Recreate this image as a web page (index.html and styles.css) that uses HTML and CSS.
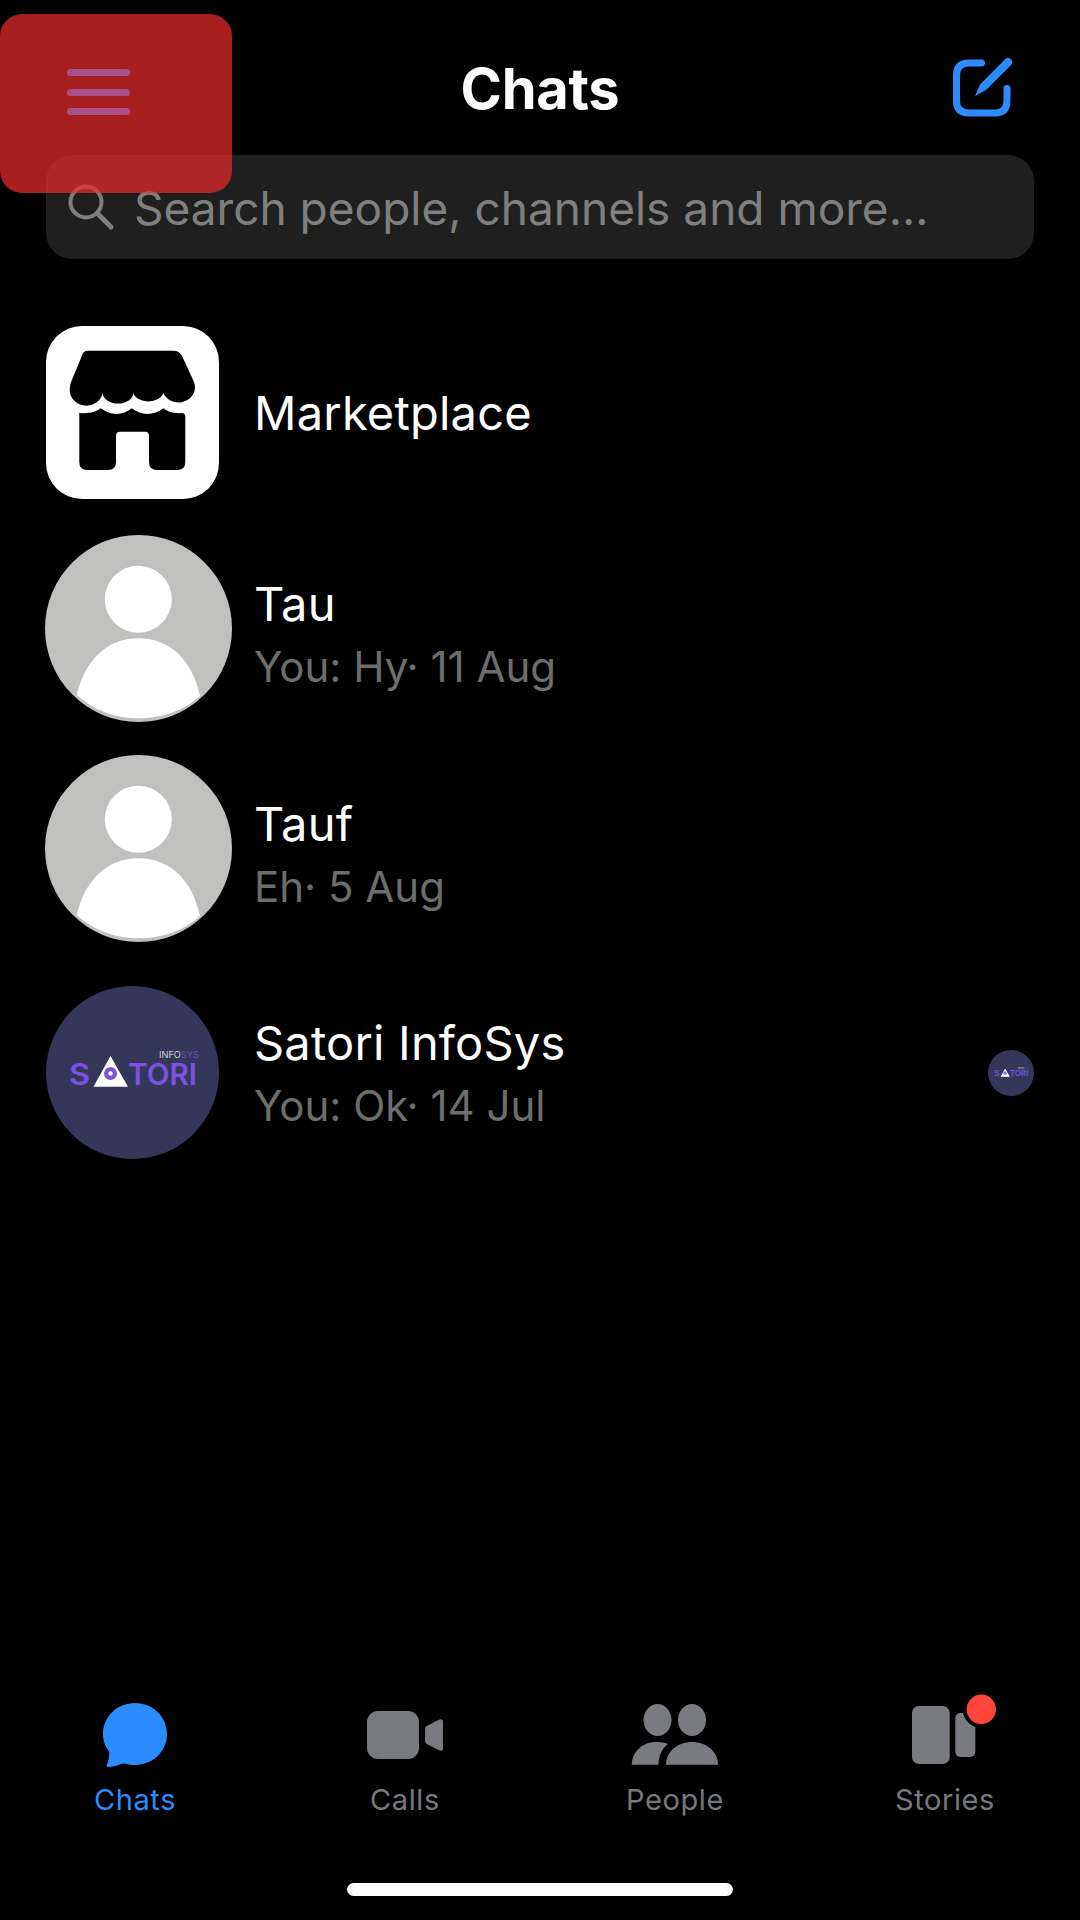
FILE: index.html
```html
<!DOCTYPE html>
<html lang="en">
<head>
    <meta charset="UTF-8">
    <meta name="viewport" content="width=device-width, initial-scale=1.0">
    <title>Chats</title>
    <link rel="stylesheet" href="styles.css">
</head>
<body>
    <div class="screen">
        <!-- Header -->
        <header class="top-bar">
            <h1 class="title">Chats</h1>
            <svg class="compose-icon" viewBox="0 0 66 64" aria-label="New message">
                <path d="M31.5 7H19Q6.5 7 6.5 19V45Q6.5 57 19 57H45Q57 57 57 45V32.5" fill="none" stroke="#2a8cff" stroke-width="7" stroke-linecap="round"/>
                <path d="M25 40L30 28.5L55.3 3A4.2 4.2 0 0 1 61.3 8.8L36 34Z" fill="#2a8cff"/>
            </svg>
        </header>

        <!-- Search -->
        <div class="search-bar">
            <svg class="search-icon" viewBox="0 0 48 48">
                <circle cx="19" cy="19" r="15.5" fill="none" stroke="#7e7e7e" stroke-width="4"/>
                <path d="M30.5 30.5L44 44" stroke="#7e7e7e" stroke-width="5" stroke-linecap="round"/>
            </svg>
            <span class="search-text">Search people, channels and more...</span>
        </div>

        <!-- Chat list -->
        <div class="chat-list">
            <div class="chat-row">
                <div class="avatar-slot">
                    <svg class="tile-avatar" viewBox="0 0 173 173">
                        <rect width="173" height="173" rx="36" fill="#fff"/>
                        <path d="M41 24.7H128Q134 24.7 137 32L147.5 55Q149 58 149 61A16.5 15.5 0 0 1 117.3 67A15.3 10.5 0 0 1 87.3 67A15.3 10.5 0 0 1 56.7 67A16.5 15.5 0 0 1 24 61Q24 58 25.5 55L35 32Q37 24.7 41 24.7Z" fill="#000"/>
                        <path d="M33.3 87C42 88 50 86 54.7 82.3C60 86 66 88 70 88C76 88 81 86 85.7 82.3C91 86 96 88 101 88C107 88 113 86 117.3 82.3C122 86 130 88 136 87Q139.3 87 139.3 91V136Q139.3 144 131 144H111Q103 144 103 136V110Q103 105.7 99 105.7H74Q70 105.7 70 110V136Q70 144 62 144H41Q33.3 144 33.3 136Z" fill="#000"/>
                    </svg>
                </div>
                <div class="chat-info">
                    <div class="chat-name">Marketplace</div>
                </div>
            </div>

            <div class="chat-row person-row">
                <div class="avatar-slot">
                    <svg class="person-avatar" viewBox="0 0 187 187">
                        <circle cx="93.5" cy="93.5" r="93.5" fill="#c0c0bf"/>
                        <circle cx="93.3" cy="64.3" r="33.5" fill="#fff"/>
                        <path d="M31.7 160C40 125 62 103.3 93.3 103.3C125 103.3 147 125 155 161C140 175 118 183.3 93.3 183.3C70 183.3 48 175 31.7 160Z" fill="#fff"/>
                    </svg>
                </div>
                <div class="chat-info">
                    <div class="chat-name">Tau</div>
                    <div class="chat-last">You: Hy· 11 Aug</div>
                </div>
            </div>

            <div class="chat-row person-row tauf-row">
                <div class="avatar-slot">
                    <svg class="person-avatar" viewBox="0 0 187 187">
                        <circle cx="93.5" cy="93.5" r="93.5" fill="#c0c0bf"/>
                        <circle cx="93.3" cy="64.3" r="33.5" fill="#fff"/>
                        <path d="M31.7 160C40 125 62 103.3 93.3 103.3C125 103.3 147 125 155 161C140 175 118 183.3 93.3 183.3C70 183.3 48 175 31.7 160Z" fill="#fff"/>
                    </svg>
                </div>
                <div class="chat-info">
                    <div class="chat-name">Tauf</div>
                    <div class="chat-last">Eh· 5 Aug</div>
                </div>
            </div>

            <div class="chat-row satori-row">
                <div class="avatar-slot">
                    <svg class="tile-avatar" viewBox="0 0 173 173">
                        <g id="satoriLogo">
                            <circle cx="86.5" cy="86.5" r="86.5" fill="#35375a"/>
                            <text class="logo-small" x="113" y="72"><tspan fill="#cfcfd8">INFO</tspan><tspan fill="#6d4fc4">SYS</tspan></text>
                            <text class="logo-big" x="23" y="99" textLength="21" lengthAdjust="spacingAndGlyphs">S</text>
                            <path d="M64.5 70L82 100.7H47.5Z" fill="#fff"/>
                            <circle cx="64.500" cy="87.500" r="6.500" fill="#7b52e0"/>
                            <circle cx="64.500" cy="87.500" r="2.200" fill="#fff"/>
                            <text class="logo-big" x="82" y="99" textLength="69" lengthAdjust="spacingAndGlyphs">TORI</text>
                        </g>
                    </svg>
                </div>
                <div class="chat-info">
                    <div class="chat-name">Satori InfoSys</div>
                    <div class="chat-last">You: Ok· 14 Jul</div>
                </div>
                <svg class="seen-avatar" viewBox="0 0 173 173"><use href="#satoriLogo"/></svg>
            </div>
        </div>

        <!-- Bottom tabs -->
        <nav class="tab-bar">
            <div class="tab tab-active">
                <svg class="tab-icon" viewBox="0 0 90 72">
                    <path d="M45 5C63 5 77 19 77 36C77 53 63 67 45 67C41 67 37 66.400 33.300 65.200C28 67.500 22 69 18 69C16.500 69 16.500 67.500 17 66.500C18.500 63 19.500 58 19.300 53.700C15.500 49 13 43 13 36C13 19 27 5 45 5Z" fill="#2a8cff"/>
                </svg>
                <span class="tab-label">Chats</span>
            </div>
            <div class="tab">
                <svg class="tab-icon" viewBox="0 0 90 72">
                    <rect x="7" y="13" width="52" height="48" rx="11" fill="#797b81"/>
                    <path d="M65 31Q65 29 66.500 28L79.500 21.500Q83 20.500 83 24V50Q83 53.500 79.500 52.500L66.500 46Q65 45 65 43Z" fill="#797b81"/>
                </svg>
                <span class="tab-label">Calls</span>
            </div>
            <div class="tab">
                <svg class="tab-icon" viewBox="0 0 90 72">
                    <ellipse cx="27.500" cy="22" rx="14" ry="16" fill="#797b81"/>
                    <ellipse cx="62" cy="22" rx="14" ry="16" fill="#797b81"/>
                    <path d="M36 66.700C36 54 47 44 62 44C77 44 88 54 88 66.700Z" fill="#797b81"/>
                    <path d="M1.700 66.700C2.500 53 13 44 26 44C30 44 35 44.500 38 46C32 50.500 28.500 58 28.500 66.700Z" fill="#797b81"/>
                </svg>
                <span class="tab-label">People</span>
            </div>
            <div class="tab">
                <svg class="tab-icon" viewBox="0 0 90 72">
                    <rect x="12" y="8" width="37.700" height="58" rx="7" fill="#797b81"/>
                    <rect x="55.300" y="15" width="20" height="44" rx="5" fill="#797b81"/>
                    <circle cx="81.300" cy="11.300" r="18.500" fill="#000"/>
                    <circle cx="81.300" cy="11.300" r="14.700" fill="#ff453a"/>
                </svg>
                <span class="tab-label">Stories</span>
            </div>
        </nav>

        <div class="home-indicator"></div>

        <!-- Red block that covers the corner of the screen -->
        <div class="menu-cover">
            <span class="menu-line"></span>
            <span class="menu-line"></span>
            <span class="menu-line"></span>
        </div>
    </div>
</body>
</html>
```

FILE: styles.css
```css
/* General Styles */
* {
    box-sizing: border-box;
}

body {
    margin: 0;
    padding: 0;
    background-color: #000;
    color: #fff;
    font-family: Inter, "Liberation Sans", sans-serif;
}

.screen {
    position: relative;
    display: flex;
    flex-direction: column;
    width: 1080px;
    height: 1920px;
    overflow: hidden;
    background-color: #000;
}

/* Header */
.top-bar {
    position: relative;
    display: flex;
    justify-content: center;
    align-items: center;
    height: 64px;
    margin-top: 56px;
}

.title {
    margin: 0;
    padding-top: 2px;
    font-size: 56px;
    font-weight: 700;
    letter-spacing: -0.3px;
}

.compose-icon {
    position: absolute;
    top: 0;
    right: 64px;
    width: 66px;
    height: 64px;
}

/* Search */
.search-bar {
    display: flex;
    align-items: center;
    gap: 19px;
    height: 104px;
    margin: 35px 46px 0;
    padding: 0 0 0 21px;
    background-color: #1f1f1f;
    border-radius: 26px;
}

.search-icon {
    width: 48px;
    height: 48px;
    flex-shrink: 0;
}

.search-text {
    padding-top: 2px;
    font-size: 46px;
    color: #7f7f7f;
}

/* Chat list */
.chat-list {
    display: flex;
    flex-direction: column;
    gap: 36px;
    margin-top: 67px;
}

.chat-row {
    display: flex;
    align-items: center;
    padding: 0 45px;
}

.person-row .chat-info {
    padding-top: 12px;
}

.tauf-row {
    margin-top: -3px;
}

.satori-row {
    margin-top: 8px;
}

.satori-row .chat-info {
    padding-top: 2px;
}

.avatar-slot {
    width: 209px;
    flex-shrink: 0;
    display: flex;
}

.tile-avatar {
    width: 173px;
    height: 173px;
    margin-left: 1px;
}

.person-avatar {
    width: 187px;
    height: 187px;
}

.chat-info {
    flex: 1;
    min-width: 0;
}

.chat-name {
    font-size: 47px;
    line-height: 63px;
    letter-spacing: 0.2px;
}

.chat-last {
    font-size: 42px;
    line-height: 63px;
    color: #6d6d6d;
}

.seen-avatar {
    width: 46px;
    height: 46px;
    margin-right: 1px;
}

/* Satori logo text */
.logo-big {
    font-size: 30px;
    font-weight: 600;
    fill: #7b52e0;
}

.logo-small {
    font-size: 9.200px;
}

/* Bottom tabs */
.tab-bar {
    display: grid;
    grid-template-columns: repeat(4, 270px);
    margin-top: auto;
}

.tab {
    display: flex;
    flex-direction: column;
    align-items: center;
    color: #77787c;
}

.tab-active {
    color: #2a8cff;
}

.tab-icon {
    width: 90px;
    height: 72px;
    overflow: visible;
}

.tab-label {
    margin-top: 13px;
    font-size: 29px;
    line-height: 34px;
    letter-spacing: 0.6px;
}

.home-indicator {
    width: 386px;
    height: 13px;
    margin: 66px auto 24px;
    background-color: #fff;
    border-radius: 7px;
}

/* Red corner block */
.menu-cover {
    position: absolute;
    top: 14px;
    left: 0;
    display: flex;
    flex-direction: column;
    gap: 12.500px;
    width: 232px;
    height: 179px;
    padding: 55px 0 0 67px;
    background-color: rgba(236, 43, 43, 0.7);
    border-radius: 22px;
}

.menu-line {
    width: 63px;
    height: 7px;
    background-color: #a9508a;
    border-radius: 4px;
}
```
